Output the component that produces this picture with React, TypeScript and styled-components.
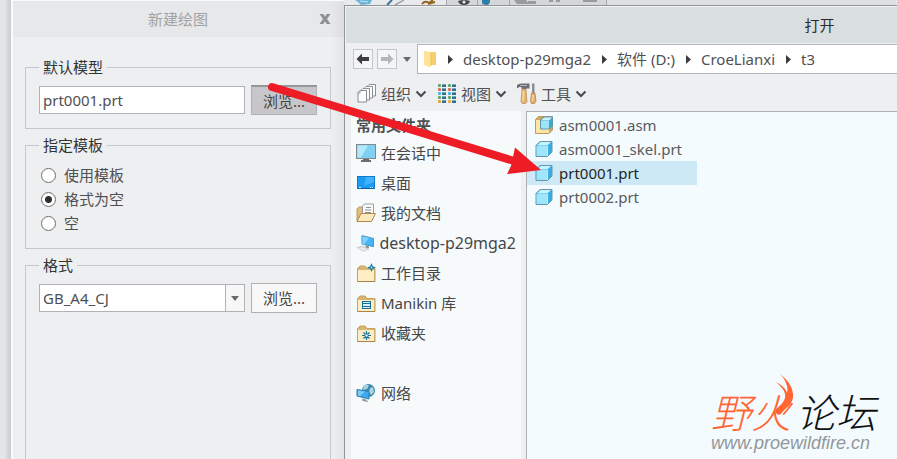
import React from "react";
import styled, { createGlobalStyle, css } from "styled-components";

const GlobalStyle = createGlobalStyle`
  *, *::before, *::after { box-sizing: border-box; }
  html, body { margin: 0; padding: 0; }
  body, button, input, select {
    font-family: "Noto Sans", "Noto Sans CJK SC", sans-serif;
    font-size: 15px;
    line-height: 20px;
    color: #505052;
  }
`;

const Desktop = styled.div`
  position: relative;
  display: flex;
  height: 100vh;
  overflow: hidden;
  background: #eeeff1;
`;

const DesktopEdge = styled.div`
  flex: none;
  width: 11px;
  background: linear-gradient(90deg, #e4e5e9 40%, #c9cace);
`;

/* New drawing dialog */

const DrawingDialog = styled.section`
  flex: none;
  width: 333px;
  display: flex;
  flex-direction: column;
  border-left: 2px solid #fbfbfc;
  border-top: 1px solid #fbfbfc;
  background: linear-gradient(90deg, #eeeff1 96%, #e2e4e6);
`;

const DrawingTitleBar = styled.header`
  display: flex;
  align-items: center;
  height: 36px;
  padding: 0 13px 0 12px;
  background: linear-gradient(90deg, #e6e8e9 96%, #dcdee0);
  color: #a2a3a3;
`;

const DrawingTitle = styled.h1`
  flex: 1;
  margin: 0;
  padding-left: 12px;
  font-size: 15px;
  font-weight: 400;
  text-align: center;
`;

const CloseButton = styled.button`
  display: flex;
  padding: 0;
  border: 0;
  background: none;
`;

const DrawingForm = styled.form`
  flex: 1;
  display: flex;
  flex-direction: column;
  gap: 6px;
  padding: 20px 13px 0 12px;
`;

const Group = styled.fieldset<{ $last?: boolean }>`
  flex: ${(p) => (p.$last ? 1 : "none")};
  margin: 0;
  min-width: 0;
  padding: 8px 13px 13px;
  border: 1px solid #c5c7ca;
  border-bottom-width: ${(p) => (p.$last ? "0" : "1px")};
`;

const GroupLegend = styled.legend`
  padding: 0 4px;
  color: #333;
`;

const FieldRow = styled.div`
  display: flex;
  align-items: center;
  gap: 6px;
`;

const fieldBox = css`
  flex: 1;
  min-width: 0;
  height: 28px;
  border: 1px solid #b0b2b5;
  border-radius: 0;
  background: #fff;
`;

const TextInput = styled.input`
  ${fieldBox}
  padding: 0 3px;
  outline: none;
`;

const Combo = styled.div`
  ${fieldBox}
  position: relative;
  display: flex;
`;

const ComboSelect = styled.select`
  flex: 1;
  min-width: 0;
  padding: 0 22px 0 3px;
  border: 0;
  appearance: none;
  background: none;
  outline: none;
`;

const ComboArrow = styled.span`
  position: absolute;
  top: 0;
  right: 0;
  bottom: 0;
  width: 19px;
  display: flex;
  align-items: center;
  justify-content: center;
  border-left: 1px solid #b0b2b5;
  background: #f7f7f8;
  pointer-events: none;
`;

const BrowseButton = styled.button<{ $pressed?: boolean }>`
  flex: none;
  width: 66px;
  height: 30px;
  padding: 0;
  border: 1px solid #afb1b4;
  border-top: ${(p) => (p.$pressed ? "2px solid #959797" : "1px solid #afb1b4")};
  background: ${(p) => (p.$pressed ? "#c7c6cb" : "#f8f8f9")};
  color: #444;
`;

const RadioRow = styled.label`
  display: flex;
  align-items: center;
  gap: 8px;
  height: 24px;
  padding-left: 2px;
`;

const Radio = styled.input`
  appearance: none;
  flex: none;
  width: 15px;
  height: 15px;
  margin: 0;
  border: 1px solid #6e6e6e;
  border-radius: 50%;
  background: #fff;
  &:checked {
    background: radial-gradient(circle, #2e2e2e 3px, #fff 4px);
  }
`;

/* Open dialog */

const OpenColumn = styled.div`
  flex: 1;
  min-width: 0;
  display: flex;
  flex-direction: column;
`;

const AppRibbon = styled.div`
  height: 5px;
  flex: none;
  overflow: hidden;
  background: #e9eaed;
  svg { display: block; }
`;

const OpenDialog = styled.section`
  flex: 1;
  min-height: 0;
  margin-right: -398px;
  display: flex;
  flex-direction: column;
  border: 1px solid #929397;
  border-bottom: 0;
  background: #eeeff1;
`;

const OpenTitleBar = styled.header`
  display: flex;
  align-items: center;
  justify-content: center;
  height: 37px;
  flex: none;
  border: 1px solid #f3f4f5;
  border-bottom: 0;
  background: #d9dedf;
`;

const OpenTitle = styled.h2`
  margin: 0;
  font-size: 15px;
  font-weight: 400;
  color: #2b2b2b;
`;

const PathRow = styled.div`
  display: flex;
  align-items: center;
  gap: 4px;
  padding: 1px 0 0 8px;
`;

const NavButton = styled.button`
  display: flex;
  align-items: center;
  justify-content: center;
  width: 20px;
  height: 20px;
  padding: 0;
  border: 1px solid #c3c6ca;
  background: #f4f5f6;
`;

const HistoryButton = styled.button`
  display: flex;
  align-items: center;
  justify-content: center;
  width: 12px;
  height: 20px;
  padding: 0;
  border: 0;
  background: none;
`;

const PathBar = styled.nav`
  flex: 1;
  display: flex;
  align-items: center;
  height: 30px;
  padding-left: 5px;
  border: 1px solid #b3b6b9;
  background: #fff;
`;

const Crumb = styled.a`
  display: flex;
  align-items: center;
  gap: 10px;
  padding-left: 11px;
  color: #505052;
  text-decoration: none;
  white-space: nowrap;
`;

const CommandBar = styled.div`
  display: flex;
  align-items: center;
  gap: 10px;
  height: 37px;
  flex: none;
  padding: 2px 0 0 12px;
`;

const CommandButton = styled.button`
  display: flex;
  align-items: center;
  gap: 4px;
  padding: 0;
  border: 0;
  background: none;
`;

const Body = styled.div`
  flex: 1;
  min-height: 0;
  display: flex;
  gap: 5px;
  padding-left: 6px;
`;

const Sidebar = styled.aside`
  flex: none;
  width: 170px;
  padding: 0 5px;
  background: #f6fafb;
`;

const SidebarHeading = styled.h3`
  margin: 0;
  height: 27px;
  font-size: 15px;
  line-height: 29px;
  font-weight: 700;
  color: #505052;
`;

const PlaceLink = styled.a<{ $spaced?: boolean; $host?: boolean }>`
  display: flex;
  align-items: center;
  gap: 5px;
  height: 30px;
  margin-top: ${(p) => (p.$spaced ? "30px" : "0")};
  font-size: ${(p) => (p.$host ? "16px" : "15px")};
  color: #464648;
  text-decoration: none;
  white-space: nowrap;
`;

const FileList = styled.ul`
  flex: 1;
  margin: 0;
  padding: 1px 0;
  list-style: none;
  border: 1px solid #adafb1;
  border-bottom: 0;
  background: #f3fbfe;
`;

const FileRow = styled.li<{ $selected?: boolean }>`
  display: flex;
  align-items: center;
  gap: 6px;
  width: 170px;
  height: 24px;
  padding-left: 8px;
  background: ${(p) => (p.$selected ? "#cde9f5" : "transparent")};
  color: ${(p) => (p.$selected ? "#262628" : "#5a5a5c")};
`;

/* Overlays */

const PointerArrow = styled.svg`
  position: absolute;
  left: 264px;
  top: 80px;
  pointer-events: none;
`;

const Watermark = styled.div`
  position: absolute;
  right: 21px;
  bottom: 6px;
  display: flex;
  flex-direction: column;
  align-items: flex-start;
  pointer-events: none;
`;

const WatermarkName = styled.div`
  display: flex;
  gap: 5px;
  font-family: "Noto Sans CJK SC", sans-serif;
  font-size: 40px;
  line-height: 44px;
  font-weight: 300;
  font-style: italic;
  color: #111;
`;

const WatermarkAccent = styled.span`
  color: #ff6633;
`;

const WatermarkUrl = styled.div`
  font-family: "Liberation Sans", sans-serif;
  font-size: 18px;
  line-height: 20px;
  font-style: italic;
  color: #94979a;
`;

const Flame = styled.svg`
  position: absolute;
  left: 61px;
  top: -16px;
`;

const Caret = ({ color = "#6a6a6c" }: { color?: string }) => (
  <svg width="8" height="5" viewBox="0 0 8 5" aria-hidden="true">
    <path d="M0 0h8L4 5z" fill={color} />
  </svg>
);

const Chevron = () => (
  <svg width="12" height="8" viewBox="0 0 12 8" aria-hidden="true">
    <path d="M1.500 1.500 6 6l4.500-4.500" fill="none" stroke="#4a4a4c" strokeWidth="2" />
  </svg>
);

const CrumbArrow = () => (
  <svg width="5" height="9" viewBox="0 0 5 9" aria-hidden="true">
    <path d="M0 0 5 4.5 0 9z" fill="#3c3c3e" />
  </svg>
);

const NavArrow = ({ color, flip }: { color: string; flip?: boolean }) => (
  <svg width="14" height="12" viewBox="0 0 14 12" aria-hidden="true">
    <path
      d={flip ? "M13.5 6 8 .5V4H1v4h7v3.500z" : "M.5 6 6 .5V4h7v4H6v3.500z"}
      fill={color}
    />
  </svg>
);

const CloseIcon = () => (
  <svg width="12" height="12" viewBox="0 0 12 12" aria-hidden="true">
    <path d="M.5 1h3.800L6 3.800 7.700 1h3.800L8 6l3.500 5H7.700L6 8.200 4.300 11H.5L4 6z" fill="#8d8f90" />
  </svg>
);

const PathFolderIcon = () => (
  <svg width="14" height="18" viewBox="0 0 14 18" aria-hidden="true">
    <path d="M5 2h8v13H5z" fill="#f5cf6e" />
    <path d="M1 1h3l4 2v13l-2 1-5-2z" fill="#ffe398" />
    <path d="M8 3v13" stroke="#eec45b" />
  </svg>
);

const OrganizeIcon = () => (
  <svg width="20" height="20" viewBox="0 0 20 20" aria-hidden="true">
    {[[10, 1], [7, 3], [4, 5], [1, 7]].map(([x, y]) => (
      <path key={x} d={`M${x + 2} ${y - 0.5}h6.500v11.500h-8.500v-9.500z`} fill="#fcfcfc" stroke="#8b8d8f" />
    ))}
    <path d="M3 6.500V9H.500" fill="none" stroke="#999b9d" />
  </svg>
);

const ViewIcon = () => (
  <svg width="20" height="20" viewBox="0 0 20 20" aria-hidden="true">
    {["#61a85b", "#d76b5d", "#45b8e4", "#61a85b", "#e5a53d"].map((dot, i) => (
      <g key={i} transform={`translate(1 ${i * 4})`}>
        <rect x="0" y="0" width="3" height="3" rx="1" fill={dot} />
        <rect x="4" y="0" width="4" height="1" fill="#7da5b8" />
        <rect x="4" y="1" width="4" height="2" fill="#2f6f8f" />
        <rect x="10" y="0" width="3" height="3" rx="1" fill={dot} />
        <rect x="14" y="0" width="4" height="1" fill="#7da5b8" />
        <rect x="14" y="1" width="4" height="2" fill="#2f6f8f" />
      </g>
    ))}
  </svg>
);

const ToolsIcon = () => (
  <svg width="20" height="21" viewBox="0 0 20 21" aria-hidden="true">
    <path d="M0 2c3-2 6-1.500 9-1.500h3.500v5H9.500V6H4.500V4.500C3 3.500 1.500 4.500 0 5.500z" fill="#6a6e77" />
    <path d="M3 2.500h7" stroke="#b1b5bb" />
    <path d="M5 6h4l1 13-1.500 1.500h-3L4 19z" fill="#dfb675" stroke="#b98a50" strokeWidth=".7" />
    <path d="M6.500 8 6 18" stroke="#f6dba7" strokeWidth="1.500" />
    <path d="m16 0 1.500 1v9H15V1z" fill="#8b9098" />
    <path d="M14.500 10h3.500l1 8-1.500 2.500h-3L13.500 18z" fill="#dfae6c" stroke="#b5803f" strokeWidth=".7" />
    <path d="m16 12-.5 6" stroke="#f8d89d" strokeWidth="1.500" />
  </svg>
);

const SessionIcon = () => (
  <svg width="20" height="20" viewBox="0 0 20 20" aria-hidden="true">
    <rect x=".5" y="1.500" width="19" height="14" fill="#7fd0f3" stroke="#85898c" />
    <path d="M1.500 2.500H12L5 14.500H1.500z" fill="#b4e8fb" />
    <path d="M7 16h6v1h2v2H5v-2h2z" fill="#6b6e71" />
  </svg>
);

const DesktopIcon = () => (
  <svg width="20" height="20" viewBox="0 0 20 20" aria-hidden="true">
    <rect x="1.500" y="3.500" width="17" height="12" fill="#1a9cf4" stroke="#1378c6" />
    <path d="M10 4h8v5L8 13z" fill="#41b2fb" />
    <path d="M2 15.500h16" stroke="#0b5ca4" />
    <path d="M3 14.500h2M14 14.500h1M16 14.500h1" stroke="#d6efff" />
  </svg>
);

const DocumentsIcon = () => (
  <svg width="20" height="20" viewBox="0 0 20 20" aria-hidden="true">
    <path d="M1 6 3 4h4v14H1z" fill="#e1bd77" stroke="#c09a5a" />
    <path d="M8.500 1h9v13h-11V3z" fill="#fafafa" stroke="#9b9da0" />
    <path d="M10 4.500h5M9 7h6M9 9.500h6" stroke="#8c9093" />
    <path d="m1 18.500 4-8h14.500l-4 8z" fill="#fbe9bd" stroke="#b3894a" />
  </svg>
);

const ComputerIcon = () => (
  <svg width="20" height="20" viewBox="0 0 20 20" aria-hidden="true">
    <path d="m6.500 2 12.500 3v9L6.500 11z" fill="#49b4f5" stroke="#3f93c6" />
    <path d="m7 3 7 1.600L9 11.500l-2-.6z" fill="#82d1fb" />
    <path d="m10 12.500 4 1v2h-3z" fill="#8a8f93" />
    <path d="m1 15 6-1.500 7 3L8 19z" fill="#d9dcde" stroke="#b8bbbe" strokeWidth=".7" />
    <path d="m3 15.500 6 2.500M5.500 15l6 2.500" stroke="#fff" strokeWidth=".7" />
  </svg>
);

const FolderShape = () => (
  <>
    <path d="M1.500 5.500 4 3h5l2 2.500h8v13H1.500z" fill="#d9b573" stroke="#c4a267" />
    <path d="M2 7h16v11H2z" fill="#ffedc6" />
    <path d="M1.500 18.500H19" stroke="#a98245" />
  </>
);

const WorkFolderIcon = () => (
  <svg width="20" height="20" viewBox="0 0 20 20" aria-hidden="true">
    <FolderShape />
    <path d="m15.500 0 1.300 3.200L20 4.500l-3.200 1.300L15.500 9l-1.300-3.200L11 4.500l3.200-1.300z" fill="#167ca7" />
    <circle cx="15.500" cy="4.500" r="1" fill="#a5e4f8" />
  </svg>
);

const LibraryIcon = () => (
  <svg width="20" height="20" viewBox="0 0 20 20" aria-hidden="true">
    <FolderShape />
    <rect x="6.500" y="8.500" width="8" height="7" fill="#d8f3f8" stroke="#176e94" />
    <path d="M7 10.500h8M7 13.500h8" stroke="#176e94" />
  </svg>
);

const FavoritesIcon = () => (
  <svg width="20" height="20" viewBox="0 0 20 20" aria-hidden="true">
    <FolderShape />
    <path d="M10.500 8v9M6 12.500h9M7.500 9.500l6 6M13.500 9.500l-6 6" stroke="#176e94" strokeWidth="1.200" />
    <circle cx="10.500" cy="12.500" r="1.200" fill="#e8f8fa" />
  </svg>
);

const NetworkIcon = () => (
  <svg width="20" height="20" viewBox="0 0 20 20" aria-hidden="true">
    <circle cx="12.500" cy="7.500" r="6.500" fill="#3c86ae" />
    <path d="M8 3c3-2 4-1 5-.5L11 6 7 7zM14 5l3-1 1 5-3 3-2-3z" fill="#a8d5e3" />
    <path d="m1 6.500 12 2V16L1 13z" fill="#3ea8ef" stroke="#2e7fb0" />
    <path d="m2 7.500 7 1L4 13l-2-.5z" fill="#7dccf8" />
    <path d="m6 15.500 4 1 2.500 2.500-6-1z" fill="#92979b" />
  </svg>
);

const PartIcon = () => (
  <svg width="18" height="18" viewBox="0 0 18 18" aria-hidden="true">
    <path d="M1 5.500 5 1.500h12V12L12.500 16.500H1z" fill="#3baede" stroke="#6497ae" />
    <path d="M2 5.500 5.500 2H16l-3.500 3.500z" fill="#c5f4fe" />
    <rect x="1.500" y="6" width="11" height="10" fill="#a0e6fa" />
    <path d="M12.500 6v10" stroke="#e6fbff" strokeWidth=".7" />
  </svg>
);

const AssemblyIcon = () => (
  <svg width="18" height="18" viewBox="0 0 18 18" aria-hidden="true">
    <path d="M.5 3.500 3.500.500H17.500V14L14 17.500H.500z" fill="#d1a758" stroke="#bb9a5c" />
    <path d="M1 4h5v8.500h8V17H1z" fill="#ffe6a7" />
    <path d="m5.500 4 3-3h9v9l-3 3h-9z" fill="#3aaad7" stroke="#6497ae" />
    <path d="m6 4.500 3-3h8l-3 3z" fill="#caf5ff" />
    <path d="M6 5h8v7.500H6z" fill="#9fe5f8" />
  </svg>
);

const RibbonArt = () => (
  <svg width="552" height="5" viewBox="0 0 552 5" aria-hidden="true">
    <path d="M11 0h17l-2 4-9 1-3-3z" fill="#69b5d6" />
    <path d="m16 1 8 1" stroke="#c3e6f3" />
    <path d="m43 5 5-5" stroke="#3c7696" strokeWidth="2" />
    <path d="m51 5 9-5" stroke="#a0a5aa" strokeWidth="1.500" />
    <path d="M78 4q3-4 7-1l4-3M84 4l7-2" stroke="#96651f" strokeWidth="2" fill="none" />
    <path d="M102 0h160v5H102z" fill="#d5d6da" />
    <path d="M102.500 0v5M133.500 0v5M138.500 0v5M165.500 0v5M262.500 0v5" stroke="#a8a9ad" />
    <path d="M114 1q6-2 12 0-1 4-6 4t-6-4z" fill="#47494b" />
    <circle cx="120" cy="2" r="1.500" fill="#eee" />
    <path d="M139 0h4v5h-4z" fill="#e5e6e9" />
    <circle cx="142" cy="1" r="4" fill="#2b7fa8" />
    <path d="M170 0h12l3 4h-12zM184 1h8v3h-8zM205 0h4v2h-4zM212 0h4v2h-4zM239 0h14v2h-14z" fill="#999ba0" />
    <path d="M263 0h289v5H263z" fill="#dedfe2" />
  </svg>
);

const crumbs = ["desktop-p29mga2", "软件 (D:)", "CroeLianxi", "t3"];

const commands = [
  { label: "组织", Icon: OrganizeIcon },
  { label: "视图", Icon: ViewIcon },
  { label: "工具", Icon: ToolsIcon },
];

const places = [
  { label: "在会话中", Icon: SessionIcon },
  { label: "桌面", Icon: DesktopIcon },
  { label: "我的文档", Icon: DocumentsIcon },
  { label: "desktop-p29mga2", Icon: ComputerIcon, host: true },
  { label: "工作目录", Icon: WorkFolderIcon },
  { label: "Manikin 库", Icon: LibraryIcon },
  { label: "收藏夹", Icon: FavoritesIcon },
  { label: "网络", Icon: NetworkIcon, spaced: true },
];

const files = [
  { name: "asm0001.asm", Icon: AssemblyIcon },
  { name: "asm0001_skel.prt", Icon: PartIcon },
  { name: "prt0001.prt", Icon: PartIcon, selected: true },
  { name: "prt0002.prt", Icon: PartIcon },
];

export default function App() {
  return (
    <Desktop>
      <GlobalStyle />
      <DesktopEdge />

      <DrawingDialog>
        <DrawingTitleBar>
          <DrawingTitle>新建绘图</DrawingTitle>
          <CloseButton type="button" aria-label="关闭">
            <CloseIcon />
          </CloseButton>
        </DrawingTitleBar>
        <DrawingForm>
          <Group>
            <GroupLegend>默认模型</GroupLegend>
            <FieldRow>
              <TextInput aria-label="默认模型" defaultValue="prt0001.prt" />
              <BrowseButton type="button" $pressed>浏览...</BrowseButton>
            </FieldRow>
          </Group>
          <Group>
            <GroupLegend>指定模板</GroupLegend>
            {["使用模板", "格式为空", "空"].map((label) => (
              <RadioRow key={label}>
                <Radio type="radio" name="template" defaultChecked={label === "格式为空"} />
                {label}
              </RadioRow>
            ))}
          </Group>
          <Group $last>
            <GroupLegend>格式</GroupLegend>
            <FieldRow>
              <Combo>
                <ComboSelect aria-label="格式" defaultValue="GB_A4_CJ">
                  <option>GB_A4_CJ</option>
                </ComboSelect>
                <ComboArrow><Caret /></ComboArrow>
              </Combo>
              <BrowseButton type="button">浏览...</BrowseButton>
            </FieldRow>
          </Group>
        </DrawingForm>
      </DrawingDialog>

      <OpenColumn>
        <AppRibbon><RibbonArt /></AppRibbon>
        <OpenDialog>
          <OpenTitleBar><OpenTitle>打开</OpenTitle></OpenTitleBar>
          <PathRow>
            <NavButton type="button" aria-label="后退"><NavArrow color="#3e3e40" /></NavButton>
            <NavButton type="button" aria-label="前进"><NavArrow color="#b4b6b8" flip /></NavButton>
            <HistoryButton type="button" aria-label="历史"><Caret /></HistoryButton>
            <PathBar aria-label="路径">
              <PathFolderIcon />
              {crumbs.map((name) => (
                <Crumb key={name} href="#">
                  <CrumbArrow />
                  {name}
                </Crumb>
              ))}
            </PathBar>
          </PathRow>
          <CommandBar>
            {commands.map(({ label, Icon }) => (
              <CommandButton key={label} type="button">
                <Icon />
                {label}
                <Chevron />
              </CommandButton>
            ))}
          </CommandBar>
          <Body>
            <Sidebar>
              <SidebarHeading>常用文件夹</SidebarHeading>
              {places.map(({ label, Icon, spaced, host }) => (
                <PlaceLink key={label} href="#" $spaced={spaced} $host={host}>
                  <Icon />
                  {label}
                </PlaceLink>
              ))}
            </Sidebar>
            <FileList>
              {files.map(({ name, Icon, selected }) => (
                <FileRow key={name} $selected={selected}>
                  <Icon />
                  {name}
                </FileRow>
              ))}
            </FileList>
          </Body>
        </OpenDialog>
      </OpenColumn>

      <PointerArrow width="280" height="100" viewBox="264 80 280 100" aria-hidden="true">
        <path d="M272 87 514 161" stroke="#ee1c25" strokeWidth="8" strokeLinecap="round" />
        <path d="M541 170 515 147.500 513 157 511 166 507 174z" fill="#ee1c25" />
      </PointerArrow>

      <Watermark>
        <WatermarkName>
          <WatermarkAccent>野火</WatermarkAccent>
          <span>论坛</span>
        </WatermarkName>
        <WatermarkUrl>www.proewildfire.cn</WatermarkUrl>
        <Flame width="24" height="46" viewBox="0 0 24 46" aria-hidden="true">
          <path d="M8 1C17 8 22 16 21 25 19 33 12 36 9 41 5 43 3 40 4 36 10 31 14 27 13 21 12 16 8 13 4 9 10 12 14 16 15 20 17 14 13 6 8 1z" fill="#ff6633" />
        </Flame>
      </Watermark>
    </Desktop>
  );
}
